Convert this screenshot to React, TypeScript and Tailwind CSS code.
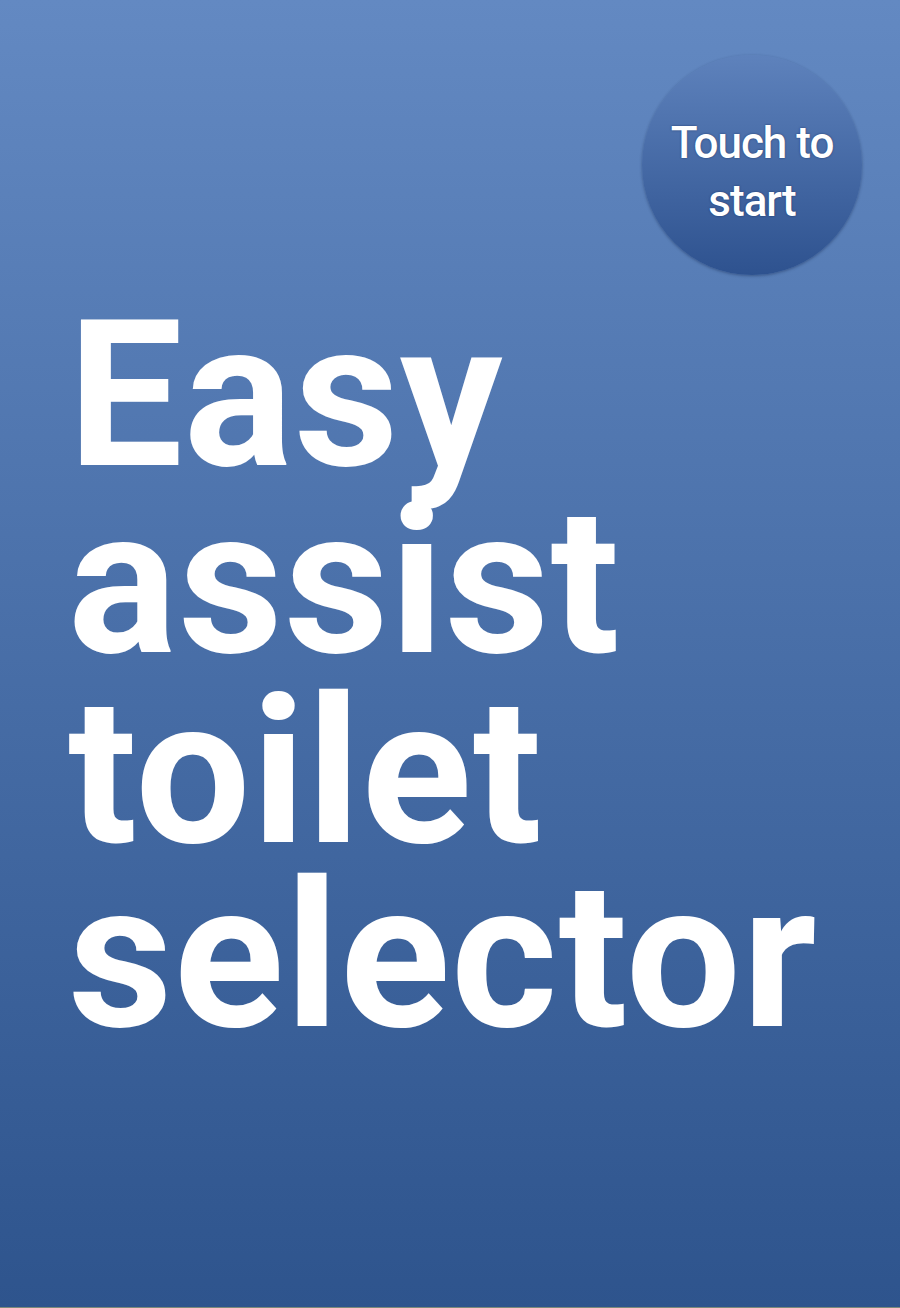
export default function App() {
  return (
    <div className="w-[900px] h-[1308px] overflow-hidden bg-gradient-to-b from-[#6389c2] to-[#2e548d] border-b border-[#7c8a7a] font-['Roboto',sans-serif] text-white">
      <div className="flex justify-end pt-[55px] pr-[38px]">
        <button className="w-[220px] h-[220px] rounded-full bg-gradient-to-b from-[#5e82bc] to-[#2e528f] shadow-[0_1px_3px_rgba(20,40,80,0.45)] flex flex-col items-center justify-center pt-[14px] text-[44px] font-medium leading-[58px] tracking-[-1px] [text-shadow:0_0_2px_rgba(20,40,90,0.8)]">
          <span>Touch to</span>
          <span>start</span>
        </button>
      </div>
      <h1 className="mt-[27px] pl-[68px] text-[204px] font-bold leading-[187px] tracking-[1px]">
        <div>Easy</div>
        <div>assist</div>
        <div className="mt-[3px] mb-[-3px]">toilet</div>
        <div>selector</div>
      </h1>
    </div>
  );
}
